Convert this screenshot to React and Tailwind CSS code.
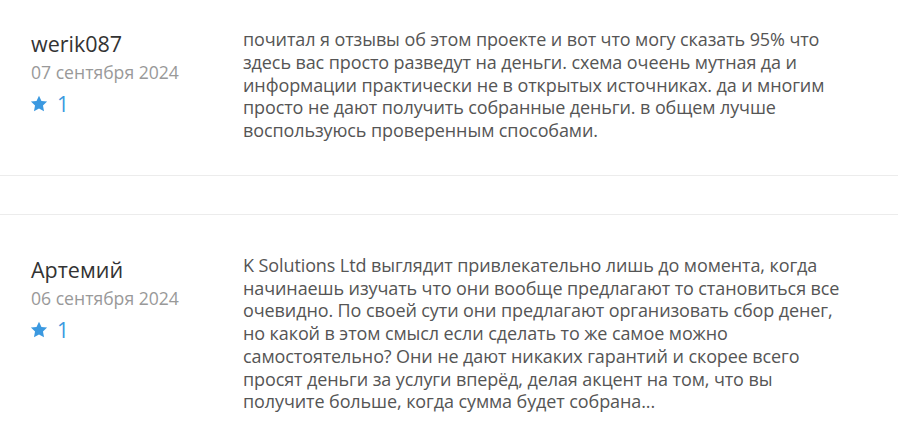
import React from "react";

const reviews = [
  {
    name: "werik087",
    date: "07 сентября 2024",
    likes: 1,
    text: "почитал я отзывы об этом проекте и вот что могу сказать 95% что здесь вас просто разведут на деньги. схема очеень мутная да и информации практически не в открытых источниках. да и многим просто не дают получить собранные деньги. в общем лучше воспользуюсь проверенным способами.",
  },
  {
    name: "Артемий",
    date: "06 сентября 2024",
    likes: 1,
    text: "K Solutions Ltd выглядит привлекательно лишь до момента, когда начинаешь изучать что они вообще предлагают то становиться все очевидно. По своей сути они предлагают организовать сбор денег, но какой в этом смысл если сделать то же самое можно самостоятельно? Они не дают никаких гарантий и скорее всего просят деньги за услуги вперёд, делая акцент на том, что вы получите больше, когда сумма будет собрана...",
  },
];

function Star() {
  return (
    <svg viewBox="0 0 24 24" className="w-[18px] h-[18px] -ml-[1px]" fill="#3b99e0">
      <path d="M12 1l3.3 6.9 7.5.9-5.5 5.2 1.4 7.5L12 17.9l-6.7 3.6 1.4-7.5-5.5-5.2 7.5-.9z" />
    </svg>
  );
}

function Review({ review, className }) {
  return (
    <div className={`flex border-[#ececec] ${className}`}>
      <div className="w-[243px] shrink-0 pl-[31px]">
        <div className="text-[21.5px] leading-[28px] text-[#333]">{review.name}</div>
        <div className="text-[17.6px] leading-[24px] text-[#999] mt-[2px]">{review.date}</div>
        <div className="flex items-center gap-[9px] mt-[7px] text-[#3b99e0] text-[21px] leading-[26px]">
          <Star />
          <span>{review.likes}</span>
        </div>
      </div>
      <p className="w-[602px] shrink-0 -mt-[2px] text-[18px] tracking-[-0.1px] leading-[22.75px] text-[#555]">{review.text}</p>
    </div>
  );
}

export default function App() {
  return (
    <div className="bg-white min-h-[436px] w-[898px] overflow-hidden" style={{ fontFamily: '"Open Sans", sans-serif' }}>
      <Review review={reviews[0]} className="pt-[30px] pb-[33px] border-b" />
      <div className="h-[38px]" />
      <Review review={reviews[1]} className="pt-[41px] border-t" />
    </div>
  );
}
